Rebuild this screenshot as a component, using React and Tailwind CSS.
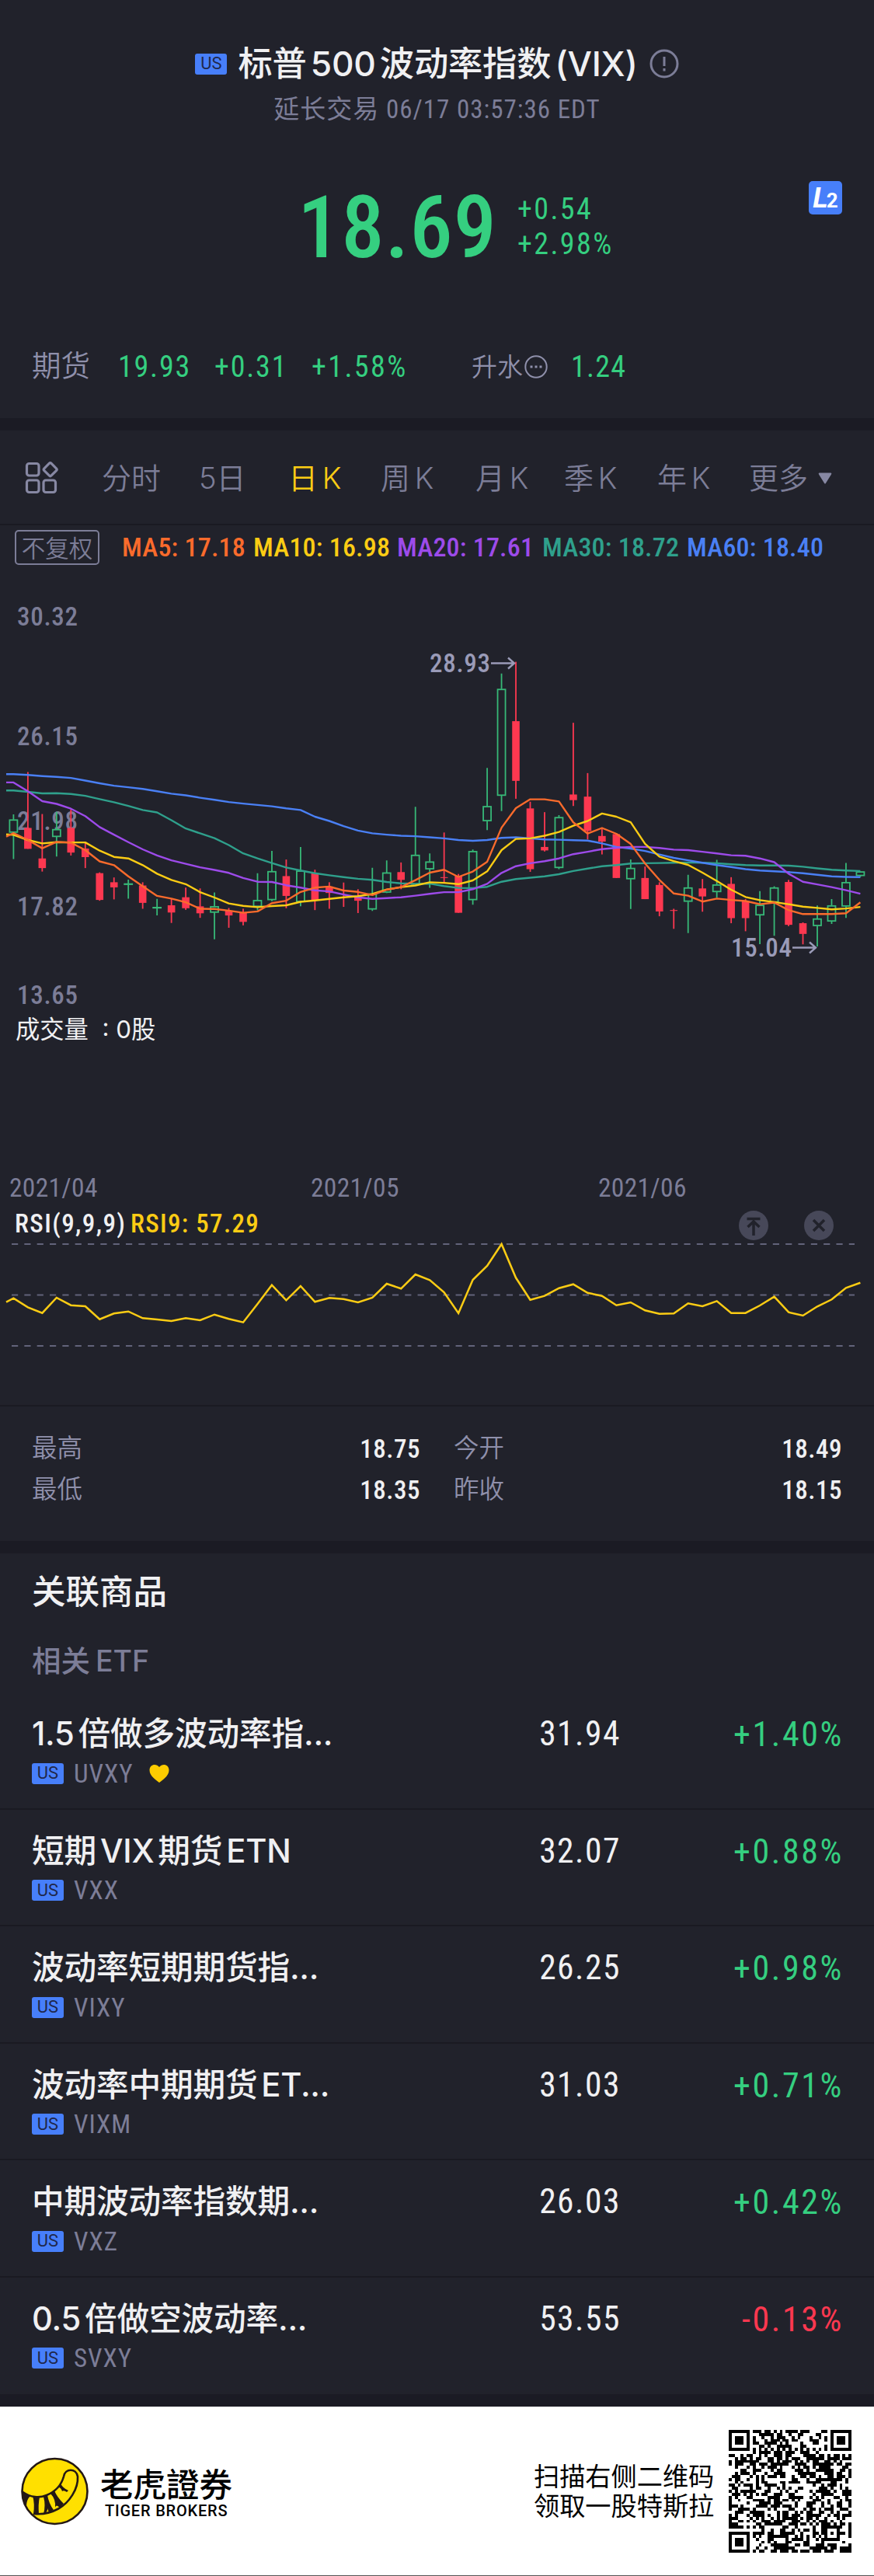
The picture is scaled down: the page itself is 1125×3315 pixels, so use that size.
import { useMemo } from "react";

const STEP = 18.475;
const FIRST_X = 17.4;
const PRICE_SCALE = 2.904;

// [direction, high, body top, body bottom, low]
const candles = [
  ["up", 778, 798, 846, 945],
  ["down", 620, 829, 907, 907],
  ["down", 777, 943, 979, 992],
  ["up", 769, 834, 862, 936],
  ["down", 760, 829, 921, 932],
  ["down", 884, 906, 938, 979],
  ["down", 995, 998, 1098, 1101],
  ["down", 1014, 1032, 1051, 1096],
  ["up", 1022, 1037, 1040, 1093],
  ["down", 1032, 1044, 1109, 1131],
  ["up", 1094, 1125, 1128, 1156],
  ["down", 1093, 1118, 1145, 1184],
  ["down", 1052, 1088, 1129, 1135],
  ["down", 1055, 1122, 1148, 1165],
  ["up", 1070, 1122, 1145, 1245],
  ["down", 1128, 1138, 1156, 1202],
  ["down", 1131, 1145, 1180, 1193],
  ["up", 998, 1099, 1123, 1137],
  ["up", 915, 991, 1098, 1103],
  ["down", 947, 1009, 1083, 1129],
  ["up", 900, 989, 1105, 1122],
  ["down", 985, 998, 1100, 1136],
  ["down", 1032, 1048, 1072, 1131],
  ["down", 1033, 1086, 1089, 1124],
  ["down", 1058, 1085, 1101, 1147],
  ["up", 978, 1075, 1133, 1139],
  ["up", 950, 996, 1070, 1072],
  ["down", 958, 994, 1023, 1058],
  ["up", 750, 930, 1040, 1040],
  ["up", 924, 955, 983, 1053],
  ["down", 846, 1013, 1016, 1031],
  ["down", 1001, 1008, 1146, 1146],
  ["up", 910, 916, 1098, 1116],
  ["up", 605, 748, 803, 837],
  ["up", 252, 310, 708, 766],
  ["down", 208, 430, 653, 720],
  ["down", 731, 756, 983, 993],
  ["down", 770, 900, 913, 917],
  ["up", 781, 789, 978, 983],
  ["down", 436, 704, 725, 747],
  ["down", 624, 712, 840, 872],
  ["down", 832, 859, 880, 928],
  ["down", 848, 852, 1016, 1016],
  ["up", 947, 979, 1020, 1132],
  ["down", 973, 1016, 1095, 1095],
  ["down", 1032, 1042, 1141, 1159],
  ["down", 1131, 1136, 1139, 1206],
  ["up", 1004, 1052, 1104, 1222],
  ["down", 1020, 1055, 1085, 1142],
  ["up", 948, 1041, 1068, 1090],
  ["down", 1013, 1038, 1166, 1185],
  ["down", 1095, 1102, 1166, 1215],
  ["up", 1065, 1117, 1155, 1263],
  ["up", 1047, 1052, 1107, 1232],
  ["down", 1023, 1031, 1191, 1196],
  ["down", 1182, 1185, 1225, 1264],
  ["up", 1119, 1168, 1195, 1272],
  ["up", 1095, 1119, 1178, 1188],
  ["up", 960, 1032, 1122, 1165],
  ["up", 990, 992, 1008, 1012],
];

const averages = [
  {
    color: "#2fa08c",
    points: [689, 689, 694, 700, 699, 702, 709, 721, 733, 747, 762, 771, 800, 831, 849, 867, 893, 924, 943, 960, 977, 988, 998, 1006, 1013, 1019, 1023, 1031, 1036, 1038, 1037, 1046, 1053, 1054, 1049, 1030, 1020, 1015, 1010, 1002, 990, 981, 972, 968, 962, 961, 960, 959, 958, 959, 961, 965, 968, 969, 969, 970, 974, 980, 985, 988, 990],
  },
  {
    color: "#4a80f5",
    points: [628, 628, 631, 635, 638, 642, 652, 662, 671, 677, 683, 692, 701, 707, 716, 724, 732, 738, 743, 748, 756, 762, 787, 803, 822, 839, 849, 854, 858, 860, 864, 868, 874, 877, 874, 866, 864, 868, 872, 873, 875, 876, 887, 900, 906, 915, 928, 941, 950, 959, 968, 975, 983, 988, 991, 994, 998, 1004, 1010, 1012, 1013],
  },
  {
    color: "#9d4bea",
    points: [659, 659, 692, 729, 739, 757, 785, 826, 854, 882, 909, 932, 950, 963, 976, 986, 997, 1016, 1030, 1031, 1043, 1052, 1062, 1066, 1078, 1088, 1094, 1091, 1088, 1082, 1075, 1069, 1069, 1058, 1038, 997, 972, 961, 953, 943, 927, 918, 908, 903, 900, 900, 904, 910, 912, 918, 924, 931, 933, 943, 957, 1000, 1030, 1040, 1050, 1062, 1075],
  },
  {
    color: "#fbcc14",
    points: [853, 855, 874, 887, 882, 883, 883, 914, 937, 943, 968, 1000, 1023, 1039, 1069, 1089, 1111, 1120, 1125, 1121, 1118, 1105, 1100, 1094, 1088, 1084, 1076, 1059, 1050, 1044, 1032, 1034, 1039, 1025, 991, 912, 870, 868, 858, 844, 821, 803, 775, 787, 808, 888, 936, 953, 967, 996, 1027, 1060, 1087, 1099, 1106, 1114, 1123, 1128, 1133, 1130, 1124],
  },
  {
    color: "#fa6b2c",
    points: [862, 848, 874, 905, 881, 884, 912, 954, 968, 1010, 1047, 1083, 1093, 1107, 1131, 1132, 1138, 1146, 1141, 1110, 1101, 1068, 1052, 1048, 1063, 1068, 1080, 1060, 1050, 1024, 996, 985, 1012, 992, 955, 828, 755, 722, 722, 730, 808, 850, 829, 851, 889, 962, 1023, 1074, 1082, 1104, 1093, 1098, 1102, 1114, 1108, 1136, 1151, 1151, 1151, 1148, 1107],
  },
];

const rsi = [587, 572, 607, 629, 570, 599, 603, 653, 631, 623, 649, 654, 660, 649, 657, 635, 652, 665, 594, 521, 580, 525, 586, 571, 575, 588, 570, 516, 535, 480, 502, 549, 630, 501, 447, 363, 493, 578, 563, 533, 518, 551, 563, 599, 588, 619, 632, 631, 592, 603, 583, 629, 629, 600, 566, 626, 639, 604, 577, 532, 512];

const axisLabels = [
  ["30.32", 73],
  ["26.15", 227],
  ["21.98", 336],
  ["17.82", 446],
  ["13.65", 560],
];

const maLabels = [
  { text: "MA5: 17.18", className: "w-[169px] text-[#fa6b2c]" },
  { text: "MA10: 16.98", className: "w-[185px] text-[#fbcc14]" },
  { text: "MA20: 17.61", className: "w-[187px] text-[#9d4bea]" },
  { text: "MA30: 18.72", className: "w-[186px] text-[#2fa08c]" },
  { text: "MA60: 18.40", className: "text-[#4a80f5]" },
];

const tabs = [
  { text: "分时", className: "w-[125px]" },
  { text: "5日", className: "w-[115px]" },
  { text: "日 K", className: "w-[119px] text-[#fbcc14]" },
  { text: "周 K", className: "w-[122px]" },
  { text: "月 K", className: "w-[114px]" },
  { text: "季 K", className: "w-[120px]" },
  { text: "年 K", className: "w-[118px]" },
];

const stats = [
  ["最高", "18.75"],
  ["今开", "18.49"],
  ["最低", "18.35"],
  ["昨收", "18.15"],
];

const etfs = [
  { name: "1.5 倍做多波动率指...", code: "UVXY", price: "31.94", change: "+1.40%", liked: true },
  { name: "短期 VIX 期货 ETN", code: "VXX", price: "32.07", change: "+0.88%" },
  { name: "波动率短期期货指...", code: "VIXY", price: "26.25", change: "+0.98%" },
  { name: "波动率中期期货 ET...", code: "VIXM", price: "31.03", change: "+0.71%" },
  { name: "中期波动率指数期...", code: "VXZ", price: "26.03", change: "+0.42%" },
  { name: "0.5 倍做空波动率...", code: "SVXY", price: "53.55", change: "-0.13%" },
];

const candleX = (index) => FIRST_X + index * STEP;

// the first point sits on the left edge, before the first candle
const toPoints = (values, scale, offset) =>
  values
    .map((value, i) => `${i === 0 ? 8 : candleX(i - 1).toFixed(1)},${(value / scale + offset).toFixed(1)}`)
    .join(" ");

function UsBadge() {
  return (
    <span className="flex h-[27px] w-[41px] shrink-0 items-center justify-center rounded-[3px] bg-[#477ffa] font-['Roboto'] text-[22px] leading-none text-[#20284a]">
      US
    </span>
  );
}

function Arrow({ x, y }) {
  return (
    <path
      d={`M${x} ${y}h30M${x + 22} ${y - 7}l8 7l-8 7`}
      fill="none"
      stroke="#9a9bb8"
      strokeWidth="2.4"
    />
  );
}

function Candle({ index, data }) {
  const [direction, high, top, bottom, low] = data;
  const x = candleX(index);
  const y = (value) => value / PRICE_SCALE + 48;

  if (direction === "up") {
    return (
      <g stroke="#37b877" strokeWidth="1.8" fill="none">
        <path d={`M${x} ${y(high)}V${y(top)}M${x} ${y(bottom)}V${y(low)}`} />
        <rect x={x - 5} y={y(top) + 0.5} width="10" height={Math.max(y(bottom) - y(top) - 1, 0.4)} />
      </g>
    );
  }
  return (
    <g fill="#fd3850">
      <rect x={x - 0.9} y={y(high)} width="1.8" height={y(low) - y(high)} />
      <rect x={x - 4.8} y={y(top)} width="9.6" height={y(bottom) - y(top)} />
    </g>
  );
}

function PriceChart() {
  return (
    <svg width="1125" height="568" viewBox="0 0 1125 568" className="block font-['Roboto_Condensed',sans-serif] text-[33px] font-medium">
      <g fill="#7c7d97">
        {axisLabels.map(([label, y]) => (
          <text key={label} x="22" y={y} textLength="78">{label}</text>
        ))}
      </g>
      {candles.map((data, i) => (
        <Candle key={i} index={i} data={data} />
      ))}
      {averages.map((line) => (
        <polyline key={line.color} points={toPoints(line.points, PRICE_SCALE, 48)} fill="none" stroke={line.color} strokeWidth="2.4" strokeLinejoin="round" />
      ))}
      <g fill="#9a9bb8">
        <text x="553" y="133" textLength="78">28.93</text>
        <text x="941" y="499" textLength="78">15.04</text>
      </g>
      <Arrow x={632} y={121.5} />
      <Arrow x={1020} y={487.5} />
    </svg>
  );
}

function RsiChart() {
  return (
    <svg width="1125" height="210" viewBox="0 0 1125 210" className="block">
      <g stroke="#62637a" strokeWidth="2" strokeDasharray="8.2 8.13">
        <path d="M15 3H1100" />
        <path d="M15 68.5H1100" />
        <path d="M15 134H1100" />
      </g>
      <polyline points={toPoints(rsi, 3, -118)} fill="none" stroke="#fbcc14" strokeWidth="2.5" />
    </svg>
  );
}

const QR_SIZE = 41;

function isFinder(row, col) {
  const corners = [[0, 0], [0, QR_SIZE - 7], [QR_SIZE - 7, 0]];
  for (const [r0, c0] of corners) {
    const r = row - r0;
    const c = col - c0;
    if (r >= -1 && r <= 7 && c >= -1 && c <= 7) {
      const ring = Math.max(Math.abs(r - 3), Math.abs(c - 3));
      return ring === 3 || ring <= 1;
    }
  }
  const ring = Math.max(Math.abs(row - 34), Math.abs(col - 34));
  if (ring <= 2) {
    return ring !== 1;
  }
  return null;
}

function QrCode() {
  const path = useMemo(() => {
    let seed = 20210617;
    let d = "";
    for (let row = 0; row < QR_SIZE; row++) {
      for (let col = 0; col < QR_SIZE; col++) {
        seed = (seed * 1103515245 + 12345) % 2147483648;
        let dark = isFinder(row, col);
        if (dark === null) {
          dark = row === 6 || col === 6 ? (row + col) % 2 === 0 : (seed >> 12) % 100 < 51;
        }
        if (dark) {
          d += `M${col} ${row}h1v1h-1z`;
        }
      }
    }
    return d;
  }, []);

  return (
    <svg width="158" height="158" viewBox="0 0 41 41" className="ml-[19px]" shapeRendering="crispEdges">
      <path d={path} fill="#000" />
    </svg>
  );
}

function TigerLogo() {
  return (
    <svg width="87" height="88" viewBox="0 0 87 88">
      <circle cx="43.5" cy="44" r="42" fill="#ffe000" stroke="#231815" strokeWidth="2.6" />
      <path
        d="M2.5 45C12 52 24 53 33 49C45 44 52 36 55 25C57 14 71 14 73 25C74 41 62 59 48 66.500C38 72 28 74 17 73"
        fill="none"
        stroke="#231815"
        strokeWidth="2.6"
        strokeLinecap="round"
      />
      <path
        d="M2 45L12 50Q7 55 7 63Q2 55 2 45ZM15 50L24 51Q22 61 23 73L16 73Q18 60 15 50ZM29 51L34 49Q36 60 42 68L36 71Q34 68 35 66L32 72L29 73Q32 62 29 51ZM38 47L43 43Q46 51 55 60L50 65Q45 60 44 65Q45 54 38 47ZM48 38L51 34Q54 40 61 43L59 45Q55 42 53 44Q52 40 48 38Z"
        fill="#231815"
      />
    </svg>
  );
}

function EtfRow({ etf, last }) {
  return (
    <div className={`h-[150.5px] px-[41px] pt-[24px] ${last ? "" : "border-b-2 border-[#1a1a22]"}`}>
      <div className="flex h-[60px] items-center whitespace-nowrap">
        <p className="w-[562px] text-[41.7px] font-medium [word-spacing:-6px] tracking-[-0.2px] text-[#f0f0f2]">{etf.name}</p>
        <p className="w-[196px] text-right font-['Roboto_Condensed'] text-[43.5px] font-[450] tracking-[1.5px] text-[#f0f0f2]">{etf.price}</p>
        <p
          className={`-mr-[2px] flex-1 text-right font-['Roboto_Condensed'] text-[44px] font-[450] tracking-[2.6px] ${
            etf.change.startsWith("-") ? "text-[#fd3850]" : "text-[#35cf80]"
          }`}
        >
          {etf.change}
        </p>
      </div>
      <div className="flex h-[40px] items-center">
        <UsBadge />
        <span className="ml-[13px] font-['Roboto_Condensed'] text-[33px] tracking-[1px] text-[#7c7d97]">{etf.code}</span>
        {etf.liked && (
          <svg width="26" height="23" viewBox="0 0 26 23" className="ml-[20px]">
            <path d="M13 23C6 18 0.500 13 0.500 7C0.500 -0.500 9 -2 13 3C17 -2 25.500 -0.500 25.500 7C25.500 13 20 18 13 23Z" fill="#fccc00" />
          </svg>
        )}
      </div>
    </div>
  );
}

export default function App() {
  return (
    <div className="w-[1125px] bg-[#21222b] font-['Inter','Noto_Sans_CJK_SC',sans-serif] leading-none text-[#7c7d97]">
      <header className="h-[538px] pt-[55px]">
        <div className="flex h-[54px] items-center justify-center">
          <UsBadge />
          <h1 className="ml-[14px] text-[44.3px] font-medium whitespace-nowrap [word-spacing:-6.5px] tracking-[-0.2px] text-[#f0f0f2]">标普 500 波动率指数 (VIX)</h1>
          <svg width="38" height="38" viewBox="0 0 38 38" className="ml-[15px]" fill="none" stroke="#7c7d97" strokeWidth="3">
            <circle cx="19" cy="19" r="17" />
            <path d="M19 10V22M19 25V28.500" />
          </svg>
        </div>
        <p className="mt-[9px] flex h-[44px] items-center justify-center font-['Roboto_Condensed','Noto_Sans_CJK_SC'] text-[33px] tracking-[1px]">
          延长交易 06/17 03:57:36 EDT
        </p>

        <div className="mt-[71px] flex h-[118px] items-center pr-[41px] pl-[383px] text-[#35cf80]">
          <p className="w-[283px] pt-[2px] font-['Roboto_Condensed'] text-[111px] font-medium tracking-[0.8px]">18.69</p>
          <div className="font-['Roboto_Condensed'] text-[38px] leading-[45px] font-[450] tracking-[2.4px]">
            <p>+0.54</p>
            <p>+2.98%</p>
          </div>
          <div className="mr-0 ml-auto flex h-[43px] w-[43px] items-baseline justify-center self-start rounded-[5px] bg-[#477ffa] font-['Roboto'] leading-[44px] font-bold text-white">
            <span className="text-[37px] italic">L</span>
            <span className="-ml-[2px] text-[26px]">2</span>
          </div>
        </div>

        <div className="mt-[96px] flex h-[50px] items-center pl-[41px] font-['Roboto_Condensed','Noto_Sans_CJK_SC'] text-[38px] font-[450] tracking-[1.8px] text-[#35cf80]">
          <span className="w-[111px] text-[37.5px] font-[350] tracking-normal text-[#8f90ab]">期货</span>
          <span className="w-[124px]">19.93</span>
          <span className="w-[125px]">+0.31</span>
          <span className="w-[206px] tracking-[2.4px]">+1.58%</span>
          <span className="text-[33px] font-[350] tracking-normal text-[#8f90ab]">升水</span>
          <svg width="30" height="30" viewBox="0 0 30 30" className="mr-[30px] ml-[2px]" fill="none" stroke="#8f90ab">
            <circle cx="15" cy="15" r="13.700" strokeWidth="2" />
            <path d="M7.500 15h3M13.500 15h3M19.500 15h3" strokeWidth="3" />
          </svg>
          <span className="tracking-[1.2px]">1.24</span>
        </div>
      </header>

      <div className="h-[16px] bg-[#1b1b24]" />

      <nav className="flex h-[122px] items-center border-b-2 border-[#1a1a22] pt-[2px] pl-[32px] font-['Inter','Noto_Sans_CJK_SC'] text-[38px] font-[350] whitespace-nowrap [word-spacing:-5px]">
        <svg width="44" height="42" viewBox="0 0 44 42" className="mr-[55px]" fill="none" stroke="#8788a3" strokeWidth="3.200">
          <rect x="2.500" y="2.500" width="15.500" height="15.500" rx="3" />
          <rect x="2.500" y="24" width="15.500" height="15.500" rx="3" />
          <rect x="24" y="24" width="15.500" height="15.500" rx="3" />
          <rect x="26.200" y="3.700" width="13" height="13" rx="2" transform="rotate(45 32.700 10.200)" />
        </svg>
        {tabs.map((tab) => (
          <span key={tab.text} className={tab.className}>{tab.text}</span>
        ))}
        <span>更多</span>
        <svg width="18" height="15" viewBox="0 0 18 15" className="ml-[13px]">
          <path d="M1.500 0.500H16.500Q18 1 17 2.500L9.800 14Q9 15 8.200 14L1 2.500Q0 1 1.500 0.500Z" fill="#8788a3" />
        </svg>
      </nav>

      <div className="flex h-[56px] items-center pl-[19px] font-['Roboto_Condensed'] text-[34px] font-medium tracking-[0.2px] whitespace-nowrap">
        <span className="mr-[29px] flex h-[45px] w-[109px] items-center justify-center rounded-[5px] border-[2.500px] border-[#7c7d97] font-['Noto_Sans_CJK_SC'] text-[30.500px] font-[350] tracking-normal">
          不复权
        </span>
        {maLabels.map((item) => (
          <span key={item.text} className={item.className}>{item.text}</span>
        ))}
      </div>

      <PriceChart />

      <div className="flex h-[208px] items-start pt-[8px] pl-[20px] text-[31.3px] leading-[34px] whitespace-pre text-[#f0f0f2]">
        成交量  : 0股
      </div>

      <div className="flex h-[42px] items-center pl-[12px] font-['Roboto_Condensed'] text-[33.5px] font-[450] tracking-[0.3px]">
        <span className="w-[388px]">2021/04</span>
        <span className="w-[370px]">2021/05</span>
        <span>2021/06</span>
      </div>

      <div className="flex h-[48px] items-center pl-[19px] font-['Roboto_Condensed'] text-[33px] font-medium">
        <span className="w-[149px] tracking-[1.4px] text-[#f0f0f2]">RSI(9,9,9)</span>
        <span className="w-[783px] tracking-[1.3px] text-[#fbcc14]">RSI9: 57.29</span>
        <svg width="38" height="38" viewBox="0 0 38 38" className="mt-[5px]" fill="none" stroke="#21222b" strokeWidth="3.500">
          <circle cx="19" cy="19" r="19" fill="#474859" stroke="none" />
          <path d="M10.500 10.500H27.500M19 32V15M11.500 21L19 14L26.500 21" />
        </svg>
        <svg width="38" height="38" viewBox="0 0 38 38" className="mt-[5px] ml-[46px]" fill="none" stroke="#21222b" strokeWidth="3.500">
          <circle cx="19" cy="19" r="19" fill="#474859" stroke="none" />
          <path d="M12 12L26 26M26 12L12 26" />
        </svg>
      </div>

      <RsiChart />

      <div className="grid h-[175px] grid-cols-2 grid-rows-[53px_52px] gap-x-[43px] border-t-2 border-[#1a1a22] pt-[28px] pr-[41px] pl-[41px]">
        {stats.map(([label, value]) => (
          <div key={label} className="flex items-center justify-between">
            <span className="text-[32.5px] font-[350] text-[#8f90ab]">{label}</span>
            <span className="font-['Roboto_Condensed'] text-[33px] font-medium tracking-[0.5px] text-[#f0f0f2]">{value}</span>
          </div>
        ))}
      </div>

      <div className="h-[16px] bg-[#1b1b24]" />

      <section className="pt-[20px]">
        <h2 className="flex h-[60px] items-center pl-[41px] text-[43.5px] font-medium text-[#f0f0f2]">关联商品</h2>
        <p className="mt-[34px] mb-[15px] flex h-[50px] items-center pl-[41px] text-[37.5px] font-medium [word-spacing:-3px]">相关 ETF</p>
        {etfs.map((etf, i) => (
          <EtfRow key={etf.code} etf={etf} last={i === etfs.length - 1} />
        ))}
      </section>

      <div className="h-[16px] bg-[#1b1b24]" />

      <footer className="flex h-[218px] items-center border-b border-[#555] bg-white pl-[27px] text-black">
        <TigerLogo />
        <div className="ml-[15px] w-[558px] pt-[2px]">
          <p className="font-['Noto_Sans_CJK_TC'] text-[42.5px] leading-[44px] font-medium">老虎證券</p>
          <p className="mt-[4px] pl-[6px] font-['Roboto'] text-[20px] leading-[20px] font-medium tracking-[0.8px]">TIGER BROKERS</p>
        </div>
        <div className="pb-[3px] font-['Noto_Sans_CJK_SC'] text-[33.2px] leading-[38px] whitespace-nowrap">
          <p>扫描右侧二维码</p>
          <p>领取一股特斯拉</p>
        </div>
        <QrCode />
      </footer>
    </div>
  );
}
